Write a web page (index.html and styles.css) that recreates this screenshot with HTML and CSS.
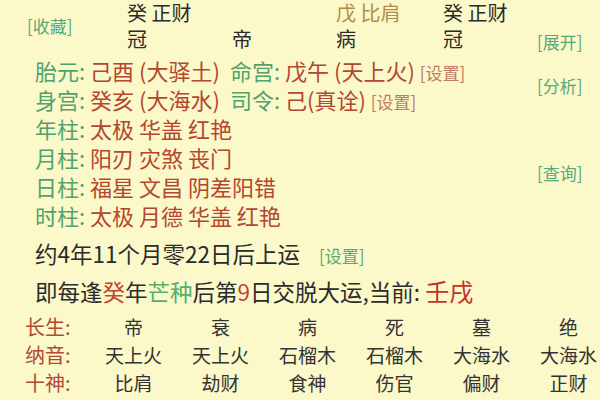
FILE: index.html
```html
<!DOCTYPE html>
<html lang="zh">
<head>
    <meta charset="UTF-8">
    <title>排盘</title>
    <link rel="stylesheet" href="styles.css">
</head>
<body>
    <div class="header">
        <span class="btn fav">[收藏]</span>
        <span class="gan">癸 正财</span>
        <span class="gan"></span>
        <span class="gan gold">戊 比肩</span>
        <span class="gan">癸 正财</span>
        <span></span>
        <span class="gan">冠</span>
        <span class="gan">帝</span>
        <span class="gan">病</span>
        <span class="gan">冠</span>
        <span class="btn expand">[展开]</span>
    </div>

    <div class="info">
        <div class="line"><span class="part"><b>胎元:</b> 己酉 (大驿土)</span><b>命宫:</b> 戊午 (天上火) <span class="set">[设置]</span></div>
        <div class="line"><span class="part"><b>身宫:</b> 癸亥 (大海水)</span><b>司令:</b> 己(真诠) <span class="set">[设置]</span></div>
        <div class="line"><b>年柱:</b> 太极 华盖 红艳</div>
        <div class="line"><b>月柱:</b> 阳刃 灾煞 丧门</div>
        <div class="line"><b>日柱:</b> 福星 文昌 阴差阳错</div>
        <div class="line"><b>时柱:</b> 太极 月德 华盖 红艳</div>
        <span class="btn analyse">[分析]</span>
        <span class="btn query">[查询]</span>
    </div>

    <div class="note first">约4年11个月零22日后上运 <span class="btn small">[设置]</span></div>
    <div class="note second">即每逢<span class="red">癸</span>年<span class="green">芒种</span>后第<span class="red">9</span>日交脱大运,当前: <span class="now">壬戌</span></div>

    <div class="table">
        <span class="label">长生:</span>
        <span>帝</span><span>衰</span><span>病</span><span>死</span><span>墓</span><span>绝</span>
        <span class="label">纳音:</span>
        <span>天上火</span><span>天上火</span><span>石榴木</span><span>石榴木</span><span>大海水</span><span>大海水</span>
        <span class="label">十神:</span>
        <span>比肩</span><span>劫财</span><span>食神</span><span>伤官</span><span>偏财</span><span>正财</span>
    </div>
</body>
</html>
```

FILE: styles.css
```css
* {
    margin: 0;
    padding: 0;
    box-sizing: border-box;
}

body {
    background: #fbf8ca;
    color: #2b2b2b;
    font-family: "Noto Sans CJK SC", sans-serif;
    overflow: hidden;
    width: 600px;
    height: 400px;
}

.btn {
    color: #5aa878;
    font-size: 17px;
}

.header {
    display: grid;
    grid-template-columns: 127px 105px 104px 107px 94px 1fr;
    grid-template-rows: 26px 26px;
    font-size: 20px;
    line-height: 26px;
    white-space: nowrap;
}

.header .fav {
    grid-row: 1 / 3;
    align-self: center;
    padding-left: 27px;
}

.header .expand {
    padding-top: 3px;
}

.gold {
    color: #b08f45;
}

.info {
    display: grid;
    grid-template-columns: 1fr 63px;
    grid-template-rows: repeat(6, 29px);
    margin-top: 4px;
    padding-left: 35px;
    font-size: 22px;
    line-height: 29px;
    color: #b5462f;
}

.line {
    grid-column: 1;
    white-space: nowrap;
}

.line b {
    font-weight: normal;
    color: #52a26c;
}

.part {
    display: inline-block;
    width: 195px;
}

.set {
    font-size: 17px;
    color: #c07a66;
}

.info .analyse {
    grid-column: 2;
    grid-row: 1 / 3;
    align-self: center;
}

.info .query {
    grid-column: 2;
    grid-row: 4 / 6;
    align-self: center;
}

.note {
    padding-left: 35px;
    font-size: 22.5px;
    white-space: nowrap;
}

.note.first {
    margin-top: 8px;
    line-height: 30px;
}

.note.second {
    line-height: 40px;
    margin-bottom: 2px;
}

.note .small {
    margin-left: 14px;
}

.red {
    color: #c0442f;
}

.green {
    color: #4fb070;
}

.now {
    color: #c8302a;
    font-size: 24px;
}

.table {
    display: grid;
    grid-template-columns: 90px repeat(6, 87px);
    grid-auto-rows: 28px;
    font-size: 19px;
    line-height: 28px;
    color: #333;
    text-align: center;
}

.table .label {
    text-align: left;
    padding-left: 25px;
    font-size: 20px;
    color: #b04a34;
}
```
